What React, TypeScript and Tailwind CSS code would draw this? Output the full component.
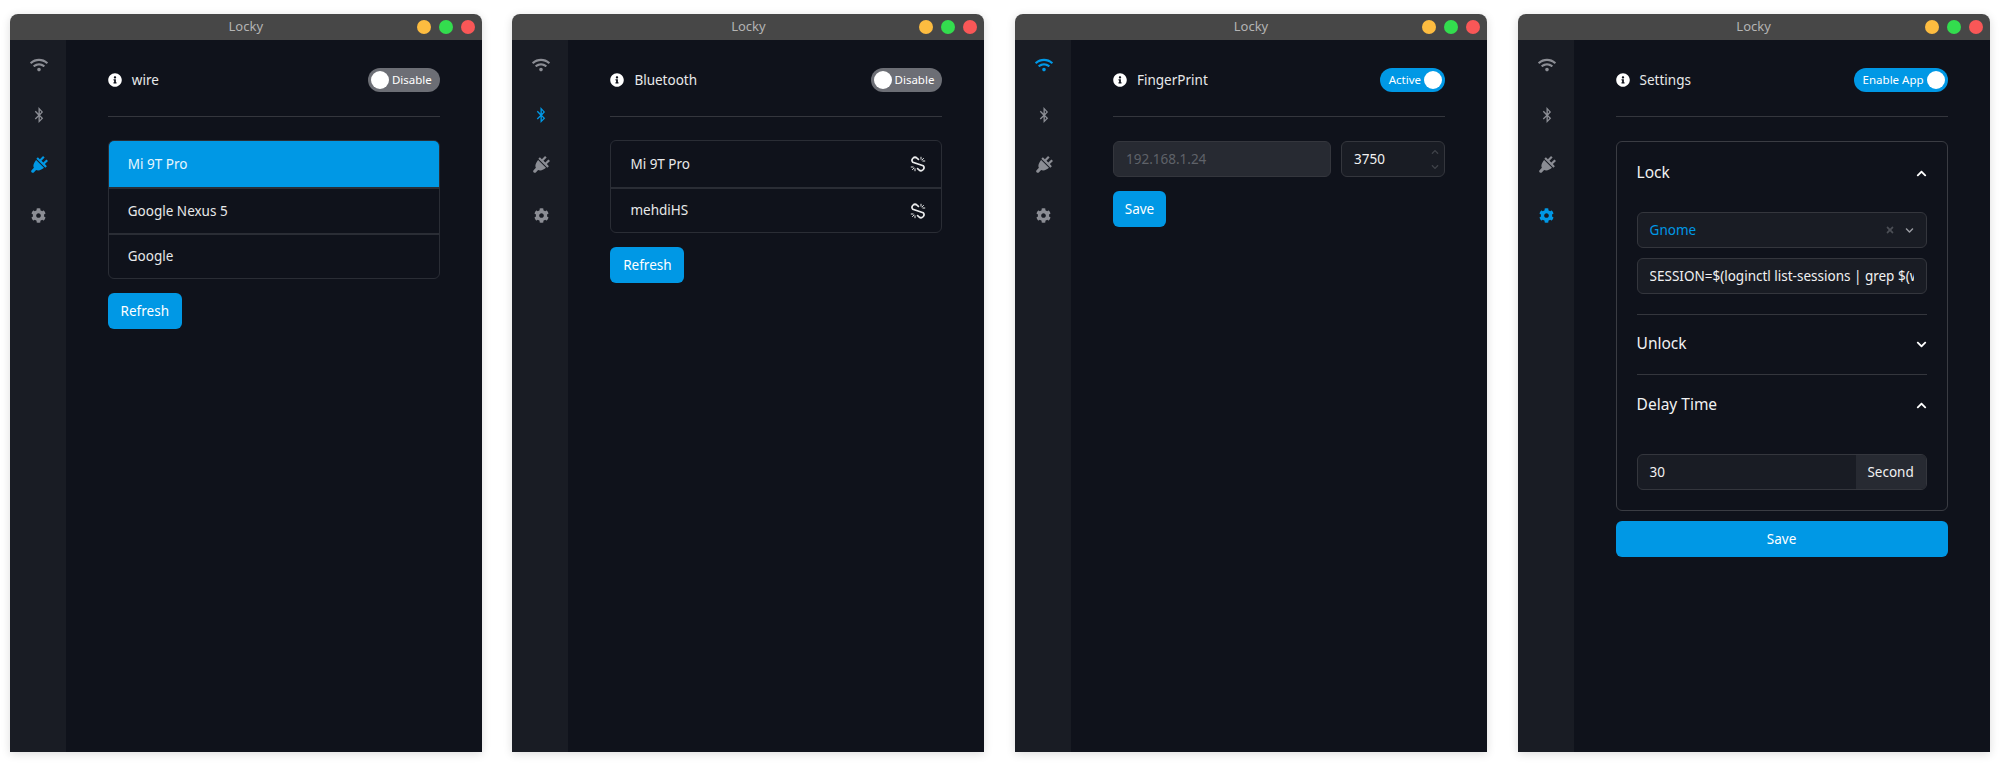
import type { ComponentType, ReactNode } from 'react'
import { FaWifi, FaBluetoothB, FaCog, FaInfoCircle, FaChevronUp, FaChevronDown, FaTimes } from 'react-icons/fa'
import { ImPowerCord } from 'react-icons/im'

const navIcons: { icon: ComponentType<{ className?: string }>; size: string }[] = [
  { icon: FaWifi, size: 'size-[18px]' },
  { icon: FaBluetoothB, size: 'size-[16px]' },
  { icon: ImPowerCord, size: 'size-[18px]' },
  { icon: FaCog, size: 'size-[15px]' }
]

function UnlinkIcon() {
  return (
    <svg viewBox="0 0 16 16" fill="none" stroke="currentColor" strokeLinecap="round" className="size-4 text-[#e8e9ea]">
      <path strokeWidth="1.7" d="M8.4 3.4 7 2.2A2.9 2.9 0 0 0 2.9 6.3L8 8l5.1 1.7A2.9 2.9 0 0 1 9 13.8l-1.4-1.2" />
      <path strokeWidth="1" d="M11 1.2v2M13.5 2.5l-1.5 1.4M14.8 5h-2M5 14.8v-2M2.5 13.5l1.5-1.4M1.2 11h2" />
    </svg>
  )
}

function Toggle({ label, on }: { label: string; on: boolean }) {
  return (
    <div className={`flex h-6 items-center rounded-full text-[11.5px] text-white ${on ? 'bg-[#0098e5] pl-[9px] pr-[3px]' : 'bg-[#6c6e75] pl-[3px] pr-2'}`}>
      {!on && <span className="size-[18px] rounded-full bg-white" />}
      <span className={on ? 'mr-[3px]' : 'ml-[3px]'}>{label}</span>
      {on && <span className="size-[18px] rounded-full bg-white" />}
    </div>
  )
}

function Button({ label, width }: { label: string; width: string }) {
  return (
    <button className={`h-9 rounded-md bg-[#0098e5] text-[13.5px] text-white ${width}`}>{label}</button>
  )
}

function Window({ active, title, toggle, on, children }: { active: number; title: string; toggle: string; on: boolean; children: ReactNode }) {
  return (
    <div className="flex h-[738px] w-[472px] flex-col overflow-hidden rounded-t-lg shadow-[0_2px_10px_rgba(0,0,0,0.14)]">
      <div className="relative flex h-[26px] shrink-0 items-center justify-center bg-[#474747] text-[13px] text-[#b4b4b4]">
        Locky
        <div className="absolute right-[7px] top-[6px] flex gap-2">
          <span className="size-[14px] rounded-full bg-[#fdbc40]" />
          <span className="size-[14px] rounded-full bg-[#33dd4e]" />
          <span className="size-[14px] rounded-full bg-[#f95757]" />
        </div>
      </div>
      <div className="flex flex-1">
        <div className="flex w-14 flex-col items-center bg-[#191c24] pl-[2px]">
          {navIcons.map((it, idx) => {
            const Icon = it.icon
            return (
              <div key={idx} className={`flex h-[50px] items-center justify-center ${idx === active ? 'text-[#0098e5]' : 'text-[#8b8d94]'}`}>
                <Icon className={it.size} />
              </div>
            )
          })}
        </div>
        <div className="flex-1 bg-[#0f121b] px-[42px] text-[13.5px] text-[#e8e9ea]">
          <div className="flex h-[77px] items-center justify-between border-b border-[#34363d] pt-1">
            <div className="flex items-center gap-[10px]">
              <FaInfoCircle className="size-[14px] text-white" />
              <span>{title}</span>
            </div>
            <Toggle label={toggle} on={on} />
          </div>
          <div className="pt-6">{children}</div>
        </div>
      </div>
    </div>
  )
}

function DeviceList({ rows, selected, unlink }: { rows: string[]; selected?: number; unlink?: boolean }) {
  return (
    <div className="-mt-px overflow-hidden rounded-md border border-[#2a2d35]">
      {rows.map((r, idx) => (
        <div
          key={r}
          className={`flex items-center justify-between pl-[19px] pr-[15px] ${idx === rows.length - 1 ? 'h-[45px]' : 'h-[46px]'} ${idx > 0 ? 'border-t-2 border-[#2a2d35]' : ''} ${selected === idx ? 'bg-[#0098e5] text-[#e8f6fd]' : ''}`}
        >
          <span>{r}</span>
          {unlink && <UnlinkIcon />}
        </div>
      ))}
    </div>
  )
}

function AccordionHead({ label, open }: { label: string; open: boolean }) {
  const Icon = open ? FaChevronUp : FaChevronDown
  return (
    <div className="flex h-6 items-center justify-between text-[15.5px] text-[#f1f1f2]">
      <span>{label}</span>
      <Icon className="size-[11px] text-white" />
    </div>
  )
}

export default function App() {
  return (
    <div className="flex h-[766px] w-[2000px] gap-[30.6px] overflow-hidden bg-white pl-[9.8px] pt-[14px] font-['Noto_Sans',sans-serif]">
      <Window active={2} title="wire" toggle="Disable" on={false}>
        <DeviceList rows={['Mi 9T Pro', 'Google Nexus 5', 'Google']} selected={0} />
        <div className="mt-[14px]"><Button label="Refresh" width="w-[74px]" /></div>
      </Window>

      <Window active={1} title="Bluetooth" toggle="Disable" on={false}>
        <DeviceList rows={['Mi 9T Pro', 'mehdiHS']} unlink />
        <div className="mt-[14px]"><Button label="Refresh" width="w-[74px]" /></div>
      </Window>

      <Window active={0} title="FingerPrint" toggle="Active" on={true}>
        <div className="flex gap-[10px]">
          <input
            disabled
            value="192.168.1.24"
            readOnly
            className="h-9 w-[218px] rounded-md border border-[#34363d] bg-[#272a32] px-3 text-[#5f6269] outline-none"
          />
          <div className="flex h-9 flex-1 items-center justify-between rounded-md border border-[#34363d] bg-[#191c24] pl-3 pr-[5px] text-[#f1f1f2]">
            <span>3750</span>
            <div className="flex flex-col gap-[7px] text-[#3f4249]">
              <FaChevronUp className="size-[8px]" />
              <FaChevronDown className="size-[8px]" />
            </div>
          </div>
        </div>
        <div className="mt-[14px]"><Button label="Save" width="w-[53px]" /></div>
      </Window>

      <Window active={3} title="Settings" toggle="Enable App" on={true}>
        <div className="rounded-md border border-[#3a3c43] px-5 pb-5 pt-[19px]">
          <AccordionHead label="Lock" open={true} />
          <div className="mt-[27px] flex h-9 items-center justify-between rounded-md border border-[#34363d] bg-[#191c24] px-3 text-[#0098e5]">
            <span>Gnome</span>
            <div className="flex items-center gap-[10px]">
              <FaTimes className="size-[10px] text-[#4b4e55]" />
              <FaChevronDown className="size-[9px] text-[#9a9ca2]" />
            </div>
          </div>
          <input
            readOnly
            value="SESSION=$(loginctl list-sessions | grep $(whoami) | awk '{print $1}')"
            className="mt-[10px] h-9 w-full rounded-md border border-[#34363d] bg-[#191c24] px-3 text-[#f1f1f2] outline-none"
          />
          <div className="mt-5 border-t border-[#34363d] pb-[17px]" />
          <AccordionHead label="Unlock" open={false} />
          <div className="mt-[18px] border-t border-[#34363d] pb-[18px]" />
          <AccordionHead label="Delay Time" open={true} />
          <div className="mt-[37px] flex h-9 overflow-hidden rounded-md border border-[#34363d] bg-[#191c24] text-[#f1f1f2]">
            <span className="flex flex-1 items-center pl-3">30</span>
            <span className="flex w-[70px] items-center justify-center bg-[#272a32]">Second</span>
          </div>
        </div>
        <div className="mt-[10px]"><Button label="Save" width="w-full" /></div>
      </Window>
    </div>
  )
}
